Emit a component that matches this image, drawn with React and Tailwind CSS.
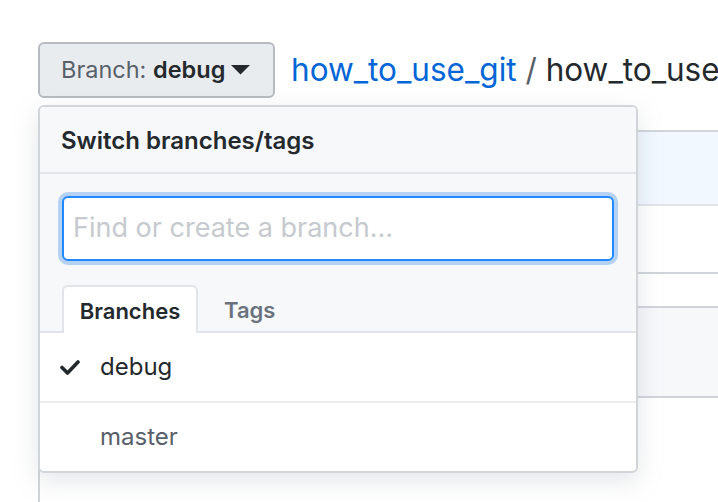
export default function App() {
  const font = { fontFamily: 'Inter, "Liberation Sans", sans-serif' };
  return (
    <div className="relative w-[718px] h-[502px] overflow-hidden bg-white" style={font}>
      <div className="pl-[38px] pt-[42px]">
        <div className="flex items-center gap-[16px] h-[56px]">
          <div className="shrink-0 flex items-center h-[56px] w-[237px] pl-[21px] rounded-[6px] border-2 border-[#b7bbc0] bg-[#e9ecef] text-[23.5px]">
            <span className="text-[#586069]">Branch:&nbsp;</span>
            <span className="font-semibold text-[#24292e]">debug</span>
            <svg width="19" height="10" viewBox="0 0 19 10" className="ml-[6px]">
              <path d="M0 0 H19 L9.5 9.5 Z" fill="#24292e" />
            </svg>
          </div>
          <div className="whitespace-nowrap text-[31.5px] leading-none">
            <span className="text-[#0366d6]">how_to_use_git</span>
            <span className="text-[#586069]"> / </span>
            <span className="text-[#24292e]">how_to_use_git</span>
          </div>
        </div>
        <div className="mt-[32px] border-l-2 border-t-2 border-[#d1d5da] h-[400px]">
          <div className="h-[74px] bg-[#f1f8ff] border-b-2 border-[#e1e4e8]" />
          <div className="h-[68px] border-b-2 border-[#d1d5da]" />
          <div className="h-[34px] border-b-2 border-[#d1d5da]" />
          <div className="h-[90px] bg-[#f6f8fa] border-b-2 border-[#d1d5da]" />
        </div>
      </div>

      <div className="absolute left-[38px] top-[105px] w-[600px] h-[368px] rounded-[6px] border-2 border-[#d1d5da] bg-white shadow-[0_8px_24px_rgba(149,157,165,0.25)] overflow-hidden">
        <div className="bg-[#f6f8fa]">
          <div className="h-[67px] flex items-center pl-[21px] pt-[2px] border-b-2 border-[#e1e4e8] text-[24px] font-semibold text-[#24292e]">
            Switch branches/tags
          </div>
          <div className="pt-[18px] px-[18px]">
            <div className="h-[73px] rounded-[10px] bg-[#b5d2f3] p-[4px]">
              <div className="h-full rounded-[6px] border-2 border-[#2188ff] bg-white flex items-center pl-[9px] text-[27px] text-[#c6cacf]">
                Find or create a branch...
              </div>
            </div>
          </div>
          <div className="mt-[20px] flex items-end border-b-2 border-[#e1e4e8] pl-[22px] h-[48px]">
            <div className="relative top-[2px] h-[48px] w-[136px] flex items-center justify-center pt-[3px] rounded-t-[6px] border-2 border-b-0 border-[#e1e4e8] bg-white text-[22px] font-semibold text-[#24292e]">
              Branches
            </div>
            <div className="h-[46px] flex items-center pl-[26px] pt-[4px] text-[22px] font-semibold text-[#6a737d]">
              Tags
            </div>
          </div>
        </div>
        <div className="h-[70px] flex items-center border-b-2 border-[#eaecef] text-[24px] text-[#24292e]">
          <svg width="20" height="16" viewBox="0 0 20 16" className="ml-[20px] mr-[20px]">
            <path d="M2 8.5 L7.5 14 L18 3" stroke="#24292e" strokeWidth="3.6" fill="none" strokeLinecap="round" strokeLinejoin="round" />
          </svg>
          debug
        </div>
        <div className="h-[68px] flex items-center pl-[60px] text-[24px] text-[#586069]">
          master
        </div>
      </div>
    </div>
  );
}
